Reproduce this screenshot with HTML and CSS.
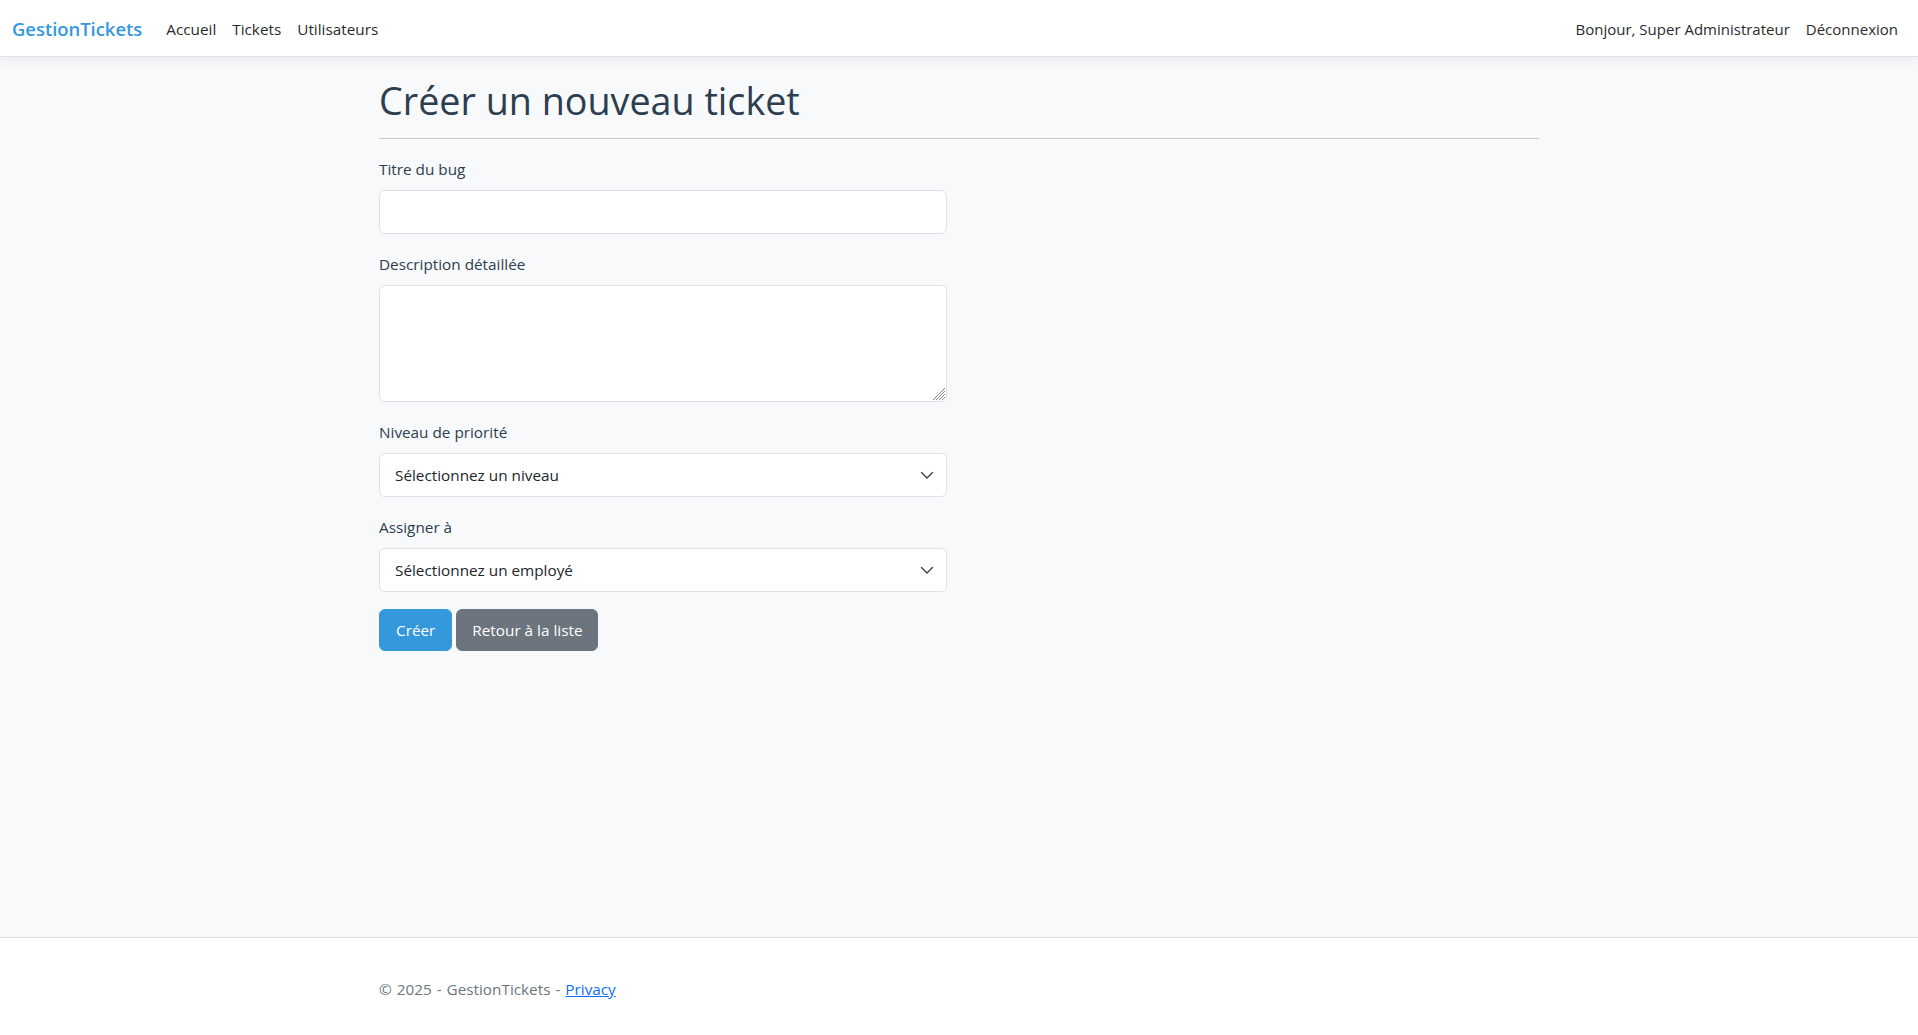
FILE: index.html
```html
<!DOCTYPE html>
<html lang="fr">
<head>
<meta charset="utf-8">
<title>Créer un nouveau ticket - GestionTickets</title>
<link rel="stylesheet" href="styles.css">
</head>
<body>
<header class="navbar">
  <div class="navbar-inner">
    <a class="brand" href="#">GestionTickets</a>
    <nav class="nav-left">
      <a class="nav-link" href="#">Accueil</a>
      <a class="nav-link" href="#">Tickets</a>
      <a class="nav-link" href="#">Utilisateurs</a>
    </nav>
    <div class="nav-right">
      <span class="nav-link">Bonjour, Super Administrateur</span>
      <a class="nav-link" href="#">Déconnexion</a>
    </div>
  </div>
</header>

<main class="main">
  <div class="container">
    <h1 class="page-title">Créer un nouveau ticket</h1>
    <form class="ticket-form">
      <div class="form-group">
        <label class="form-label" for="titre">Titre du bug</label>
        <input class="form-control" id="titre" type="text">
      </div>
      <div class="form-group">
        <label class="form-label" for="desc">Description détaillée</label>
        <div class="textarea-wrap">
          <textarea class="form-control form-textarea" id="desc"></textarea>
          <svg class="grip" width="12" height="12" viewBox="0 0 12 12"><path d="M12 0L0 12M12 3L3 12M12 6L6 12M12 9L9 12" fill="none" stroke="#8a8a8a" stroke-width="1"/></svg>
        </div>
      </div>
      <div class="form-group">
        <label class="form-label" for="prio">Niveau de priorité</label>
        <div class="select-wrap">
          <select class="form-control form-select" id="prio">
            <option>Sélectionnez un niveau</option>
          </select>
          <svg class="chevron" width="16" height="16" viewBox="0 0 16 16"><path d="M2.5 5.5l5.5 5.5 5.5-5.5" fill="none" stroke="#343a40" stroke-width="1.3" stroke-linecap="round" stroke-linejoin="round"/></svg>
        </div>
      </div>
      <div class="form-group form-group-last">
        <label class="form-label" for="assign">Assigner à</label>
        <div class="select-wrap">
          <select class="form-control form-select" id="assign">
            <option>Sélectionnez un employé</option>
          </select>
          <svg class="chevron" width="16" height="16" viewBox="0 0 16 16"><path d="M2.5 5.5l5.5 5.5 5.5-5.5" fill="none" stroke="#343a40" stroke-width="1.3" stroke-linecap="round" stroke-linejoin="round"/></svg>
        </div>
      </div>
      <div class="actions">
        <button type="button" class="btn btn-primary">Créer</button>
        <a class="btn btn-secondary" href="#">Retour à la liste</a>
      </div>
    </form>
  </div>
</main>

<footer class="footer">
  <div class="container footer-inner">
    © 2025 - GestionTickets - <a class="footer-link" href="#">Privacy</a>
  </div>
</footer>
</body>
</html>
```

FILE: styles.css
```css
* {
  box-sizing: border-box;
}

html, body {
  margin: 0;
  padding: 0;
}

body {
  font-family: "Open Sans", "Noto Sans", "DejaVu Sans", sans-serif;
  font-size: 15.3px;
  line-height: 24px;
  color: #2c3e50;
  background: #f8f9fa;
  min-height: 100vh;
  display: flex;
  flex-direction: column;
}

a {
  text-decoration: none;
  color: inherit;
}

/* Navbar */
.navbar {
  background: #ffffff;
  border-bottom: 1px solid #dee2e6;
  box-shadow: 0 4px 12px rgba(0, 0, 0, 0.05);
  height: 57px;
  position: relative;
  z-index: 2;
}

.navbar-inner {
  height: 56px;
  padding: 2px 12px 0;
  display: flex;
  align-items: center;
}

.brand {
  font-size: 18.4px;
  line-height: 30px;
  font-weight: 600;
  color: #3498db;
  margin-right: 16px;
}

.nav-left {
  display: flex;
  align-items: center;
}

.nav-right {
  margin-left: auto;
  display: flex;
  align-items: center;
}

.nav-link {
  padding: 8px;
  color: #2b2b2b;
  line-height: 24px;
}

.nav-right .nav-link {
  font-size: 15px;
}

/* Main */
.main {
  flex: 1 0 auto;
  padding-top: 20px;
}

.container {
  width: 1160px;
  margin: 0 auto;
}

.page-title {
  margin: 0;
  font-size: 37.7px;
  line-height: 48px;
  font-weight: 400;
  color: #2c3e50;
  padding-bottom: 13px;
  border-bottom: 1px solid #c9cacc;
}

.ticket-form {
  width: 568px;
  padding-top: 19px;
}

.form-group {
  margin-bottom: 19px;
}

.form-group-last {
  margin-bottom: 17px;
}

.form-label {
  display: block;
  margin-bottom: 10px;
  line-height: 22px;
  color: #2c3e50;
}

.form-control {
  display: block;
  width: 100%;
  height: 44px;
  padding: 0 15px;
  font-family: inherit;
  font-size: 15.3px;
  line-height: 24px;
  color: #212529;
  background: #ffffff;
  border: 1px solid #dee2e6;
  border-radius: 6px;
  outline: none;
}

.textarea-wrap {
  position: relative;
}

.form-textarea {
  height: 117px;
  padding: 9px 15px;
  resize: none;
}

.grip {
  position: absolute;
  right: 2px;
  bottom: 2px;
  pointer-events: none;
}

.select-wrap {
  position: relative;
}

.form-select {
  appearance: none;
  -webkit-appearance: none;
  padding-right: 40px;
}

.chevron {
  position: absolute;
  right: 12px;
  top: 14px;
  pointer-events: none;
}

/* Buttons */
.actions {
  display: flex;
  gap: 4px;
}

.btn {
  display: inline-block;
  padding: 8px 16px;
  font-family: inherit;
  font-size: 15.3px;
  line-height: 24px;
  border: 1px solid transparent;
  border-radius: 6px;
  color: #ffffff;
  cursor: pointer;
}

.btn-secondary {
  padding: 8px 15px;
}

.btn-primary {
  background: #3498db;
  border-color: #3498db;
}

.btn-secondary {
  background: #6c757d;
  border-color: #6c757d;
}

/* Footer */
.footer {
  flex-shrink: 0;
  background: #ffffff;
  border-top: 1px solid #dee2e6;
  height: 98px;
}

.footer-inner {
  padding-top: 21px;
  line-height: 60px;
  color: #6c757d;
  white-space: nowrap;
  word-spacing: 1px;
}

.footer-link {
  color: #0d6efd;
  text-decoration: underline;
}
```
